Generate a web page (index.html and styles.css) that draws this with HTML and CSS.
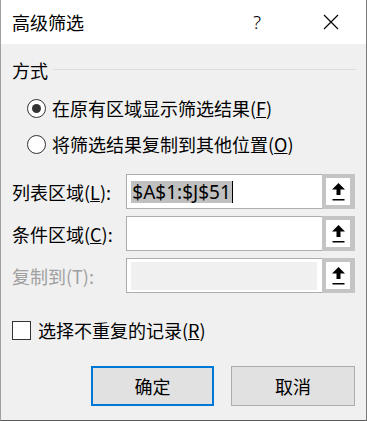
FILE: index.html
```html
<!DOCTYPE html>
<html lang="zh-CN">
<head>
	<meta charset="UTF-8">
	<title>高级筛选</title>
	<link rel="stylesheet" href="styles.css">
</head>
<body>
	<div id="dialog">
		<!-- Title bar -->
		<div class="titlebar">
			<span class="title">高级筛选</span>
			<span class="help">?</span>
			<span class="close">
				<svg width="16" height="16" viewBox="0 0 16 16"><path d="M1 1 L15 15 M15 1 L1 15" stroke="#000" stroke-width="1.2" fill="none"/></svg>
			</span>
		</div>

		<div class="content">
			<!-- Mode group -->
			<div class="group-head">
				<span>方式</span>
				<div class="rule"></div>
			</div>
			<div class="radio-row">
				<span class="radio checked"></span>
				<span>在原有区域显示筛选结果(<u>F</u>)</span>
			</div>
			<div class="radio-row">
				<span class="radio"></span>
				<span>将筛选结果复制到其他位置(<u>O</u>)</span>
			</div>

			<!-- Range fields -->
			<div class="field-row">
				<label class="field-label">列表区域(<u>L</u>):</label>
				<div class="field">
					<div class="field-text"><span class="sel">$A$1:$J$51</span><span class="caret"></span></div>
					<div class="pick">
						<svg width="13" height="18" viewBox="0 0 13 18"><polygon points="6.5,0 13,6.5 8.5,6.5 8.5,12 4.5,12 4.5,6.5 0,6.5" fill="#000"/><rect x="0.5" y="16" width="12" height="1.5" fill="#000"/></svg>
					</div>
				</div>
			</div>
			<div class="field-row">
				<label class="field-label">条件区域(<u>C</u>):</label>
				<div class="field">
					<div class="field-text"></div>
					<div class="pick">
						<svg width="13" height="18" viewBox="0 0 13 18"><polygon points="6.5,0 13,6.5 8.5,6.5 8.5,12 4.5,12 4.5,6.5 0,6.5" fill="#000"/><rect x="0.5" y="16" width="12" height="1.5" fill="#000"/></svg>
					</div>
				</div>
			</div>
			<div class="field-row">
				<label class="field-label disabled">复制到(T):</label>
				<div class="field">
					<div class="field-text off"><div class="fill"></div></div>
					<div class="pick">
						<svg width="13" height="18" viewBox="0 0 13 18"><polygon points="6.5,0 13,6.5 8.5,6.5 8.5,12 4.5,12 4.5,6.5 0,6.5" fill="#000"/><rect x="0.5" y="16" width="12" height="1.5" fill="#000"/></svg>
					</div>
				</div>
			</div>

			<!-- Unique checkbox -->
			<div class="check-row">
				<span class="checkbox"></span>
				<span>选择不重复的记录(<u>R</u>)</span>
			</div>

			<!-- Buttons -->
			<div class="buttons">
				<button class="btn default">确定</button>
				<button class="btn cancel">取消</button>
			</div>
		</div>
	</div>
</body>
</html>
```

FILE: styles.css
```css
html, body {
	margin: 0;
	padding: 0;
}
body {
	font-family: "Noto Sans CJK SC", "Noto Sans", sans-serif;
	font-size: 18px;
	color: #000;
	background-color: #f0f0f0;
}
#dialog {
	width: 367px;
	height: 421px;
	box-sizing: border-box;
	background-color: #f0f0f0;
	border-left: 1px solid #a0a0a0;
	border-right: 1px solid #7a7a7a;
	border-bottom: 1px solid #5a5a5a;
}
.titlebar {
	height: 44px;
	background-color: #fff;
	display: flex;
	align-items: center;
	padding-left: 11px;
}
.title {
	flex: 1;
	line-height: 24px;
}
.help {
	width: 10px;
	margin-right: 61px;
	font-family: "Noto Sans", sans-serif;
	font-size: 19px;
	font-weight: 300;
	line-height: 24px;
	text-align: center;
}
.close {
	width: 16px;
	height: 16px;
	margin-right: 27px;
	display: flex;
}
.content {
	padding: 14px 11px 0 11px;
}
.group-head {
	display: flex;
	align-items: center;
	line-height: 24px;
}
.group-head .rule {
	flex: 1;
	height: 1px;
	background-color: #dcdcdc;
	margin-left: 5px;
	margin-right: -1px;
	margin-top: -2px;
}
.radio-row {
	display: flex;
	align-items: center;
	height: 36px;
	padding-left: 15px;
}
.group-head + .radio-row {
	margin-top: 8px;
}
.radio {
	width: 17px;
	height: 17px;
	border: 1px solid #333;
	border-radius: 50%;
	background-color: #fff;
	margin-right: 6px;
	display: flex;
	align-items: center;
	justify-content: center;
}
.radio.checked::after {
	content: "";
	width: 9px;
	height: 9px;
	border-radius: 50%;
	background-color: #333;
}
.field-row {
	display: flex;
	align-items: center;
	margin-top: 7px;
}
.radio-row + .field-row {
	margin-top: 12px;
}
.field-label {
	width: 115px;
	line-height: 24px;
}
.field-label.disabled {
	color: #a0a0a0;
}
.field {
	width: 230px;
	height: 35px;
	box-sizing: border-box;
	border: 1px solid #adadad;
	background-color: #fff;
	display: flex;
}
.field-text {
	flex: 1;
	display: flex;
	align-items: center;
	padding-left: 4px;
}
.field-text.off {
	padding: 3px 5px 2px 4px;
	align-items: stretch;
}
.field-text .fill {
	flex: 1;
	background-color: #f0f0f0;
}
.sel {
	font-family: "Noto Sans", sans-serif;
	font-size: 19px;
	line-height: 22px;
	background-color: #c0c0c0;
	padding: 0 1px;
}
.caret {
	width: 1px;
	height: 22px;
	background-color: #000;
}
.pick {
	width: 33px;
	box-sizing: border-box;
	border: 4px solid #c4c4c4;
	border-right-width: 5px;
	display: flex;
	align-items: center;
	justify-content: center;
	margin: -1px -1px -1px 0;
	padding-top: 1px;
}
.check-row {
	display: flex;
	align-items: center;
	line-height: 24px;
	margin-top: 25px;
}
.checkbox {
	width: 17px;
	height: 17px;
	border: 1px solid #333;
	background-color: #fff;
	margin-right: 7px;
}
.buttons {
	display: flex;
	justify-content: flex-end;
	gap: 17px;
	margin-top: 24px;
}
.btn {
	width: 123px;
	height: 40px;
	box-sizing: border-box;
	background-color: #e1e1e1;
	border: 1px solid #adadad;
	font-family: "Noto Sans CJK SC", sans-serif;
	font-size: 18px;
	color: #000;
	padding: 0;
}
.btn.cancel {
	width: 124px;
}
.btn.default {
	border: 2px solid #0078d7;
}
```
